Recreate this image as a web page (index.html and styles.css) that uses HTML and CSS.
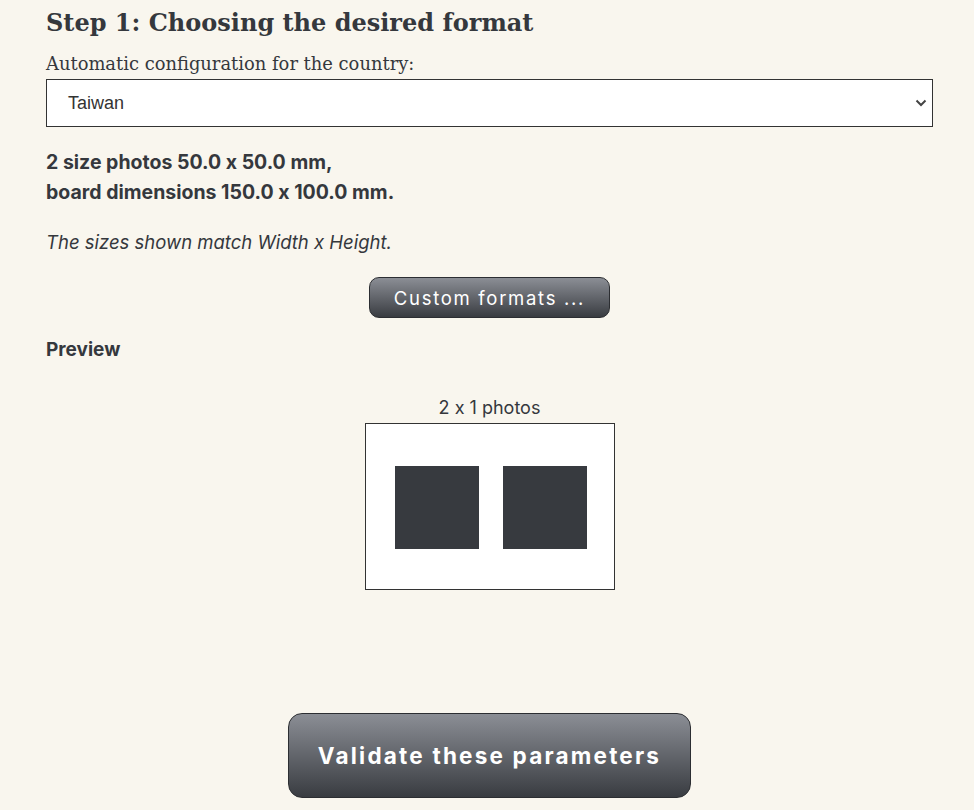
FILE: index.html
```html
<!DOCTYPE html>
<html>
<head>
<meta charset="utf-8">
<link rel="stylesheet" href="styles.css">
</head>
<body>
<main class="page">
  <h2 class="title">Step 1: Choosing the desired format</h2>
  <label class="label" for="country">Automatic configuration for the country:</label>
  <div class="select">
    <span class="select-value">Taiwan</span>
    <svg class="chev" width="12" height="8" viewBox="0 0 12 8"><path d="M1.5 1.5 L6 6 L10.5 1.5" fill="none" stroke="#444" stroke-width="2"/></svg>
  </div>
  <p class="summary">2 size photos 50.0 x 50.0 mm,<br>board dimensions 150.0 x 100.0 mm.</p>
  <p class="note">The sizes shown match Width x Height.</p>
  <div class="center"><button class="btn btn-small">Custom formats ...</button></div>
  <p class="preview-title">Preview</p>
  <div class="preview">
    <div class="preview-caption">2 x 1 photos</div>
    <div class="board">
      <div class="photo"></div>
      <div class="photo"></div>
    </div>
  </div>
  <div class="center validate-wrap"><button class="btn btn-big">Validate these parameters</button></div>
</main>
</body>
</html>
```
FILE: styles.css
```css
html, body {
  margin: 0;
  padding: 0;
  background: #f9f6ee;
}
body {
  color: #35383d;
  font-family: Inter, "Noto Sans", sans-serif;
  font-feature-settings: "calt" 0;
}
.page {
  padding: 0 41px 0 46px;
}
.title {
  font-family: "DejaVu Serif", Georgia, serif;
  font-weight: bold;
  font-size: 24px;
  margin: 0;
  padding-top: 7px;
  line-height: 32px;
  color: #35383d;
}
.label {
  display: block;
  font-family: "DejaVu Serif", serif;
  font-size: 17.9px;
  margin-top: 14px;
  line-height: 22px;
}
.select {
  margin-top: 4px;
  height: 46px;
  border: 1px solid #333;
  background: #fff;
  display: flex;
  align-items: center;
  justify-content: space-between;
  padding: 0 5px 0 21px;
}
.select-value {
  font-family: "Liberation Sans", sans-serif;
  font-size: 18px;
  color: #333;
}
.chev { display: block; }
.summary {
  font-weight: bold;
  font-size: 19.5px;
  line-height: 30px;
  margin: 20px 0 0;
}
.note {
  font-style: italic;
  font-size: 18.5px;
  margin: 23px 0 0;
  line-height: 24px;
}
.center {
  display: flex;
  justify-content: center;
}
.btn {
  color: #fff;
  background: linear-gradient(#8b8e95, #393c41);
  border: 1px solid #2c2e32;
  font-family: Inter, sans-serif;
  font-feature-settings: "calt" 0;
  cursor: pointer;
  padding: 0;
}
.btn-small {
  margin-top: 23px;
  width: 241px;
  height: 41px;
  border-radius: 10px;
  font-size: 18.5px;
  letter-spacing: 1.7px;
}
.preview-title {
  font-weight: bold;
  font-size: 19px;
  margin: 21px 0 0;
  line-height: 22px;
}
.preview {
  display: flex;
  flex-direction: column;
  align-items: center;
  margin-top: 36px;
}
.preview-caption {
  font-size: 18px;
  line-height: 22px;
  margin-bottom: 4px;
}
.board {
  border: 1px solid #333;
  background: #fff;
  display: flex;
  gap: 24px;
  padding: 42px 0 0 29px;
  width: 219px;
  height: 123px;
}
.photo {
  width: 84px;
  height: 83px;
  background: #373a3f;
}
.validate-wrap {
  margin-top: 123px;
}
.btn-big {
  width: 403px;
  height: 85px;
  border-radius: 14px;
  font-size: 22.5px;
  font-weight: bold;
  letter-spacing: 2.2px;
}
```
